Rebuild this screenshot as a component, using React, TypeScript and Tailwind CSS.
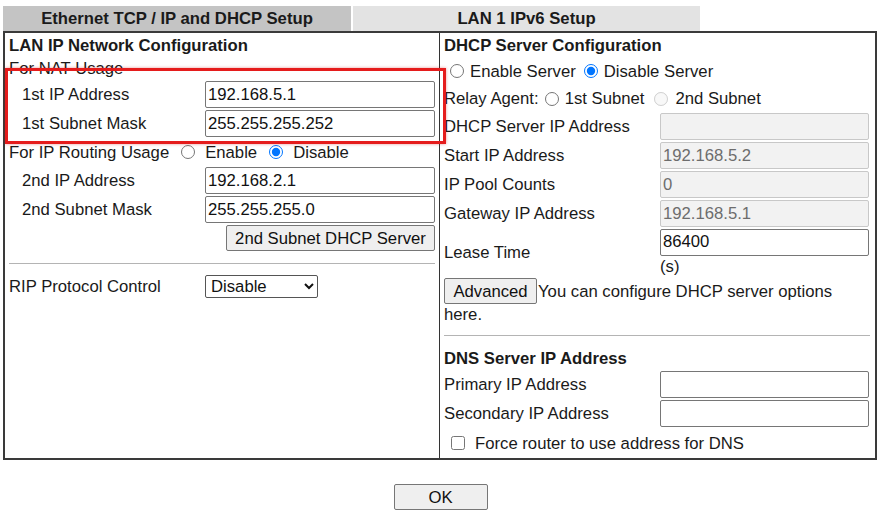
import React from 'react';

const font = { fontFamily: '"Liberation Sans", Arial, sans-serif' };

function TextBox({ value = '', disabled = false, className = '' }: { value?: string; disabled?: boolean; className?: string }) {
  return (
    <input
      type="text"
      defaultValue={value}
      disabled={disabled}
      className={
        'h-[27px] rounded-[2px] border px-[2px] text-[16.7px] outline-none ' +
        (disabled
          ? 'border-[#c8c8c8] bg-[#f2f2f2] text-[#6d6d6d] '
          : 'border-[#767676] bg-white text-[#111] ') +
        className
      }
    />
  );
}

function Radio({ name, checked = false, disabled = false }: { name: string; checked?: boolean; disabled?: boolean }) {
  return (
    <input
      type="radio"
      name={name}
      defaultChecked={checked}
      disabled={disabled}
      className="h-[14px] w-[14px] shrink-0 accent-[#0075ff]"
    />
  );
}

function LeftRow({ label, value }: { label: string; value: string }) {
  return (
    <div className="flex h-[29px] items-center">
      <span className="w-[198px] pl-[15px]">{label}</span>
      <TextBox value={value} className="w-[230px]" />
    </div>
  );
}

function RightRow({ label, value, disabled = false }: { label: string; value?: string; disabled?: boolean }) {
  return (
    <div className="flex h-[29px] items-center">
      <span className="w-[220px] pl-[4px]">{label}</span>
      <TextBox value={value} disabled={disabled} className="w-[209px]" />
    </div>
  );
}

export default function App() {
  return (
    <div className="w-[878px] bg-white px-[3px] pt-[6px] text-[16.7px] leading-[19px] text-[#1a1a1a]" style={font}>
      {/* Tabs */}
      <div className="flex h-[25px]">
        <div className="flex w-[348px] items-center justify-center bg-[#c4c4c4] font-bold">
          Ethernet TCP / IP and DHCP Setup
        </div>
        <div className="ml-[2px] flex w-[347px] items-center justify-center bg-[#e3e3e3] font-bold">
          LAN 1 IPv6 Setup
        </div>
      </div>

      {/* Main table */}
      <div className="relative flex h-[429px] w-[874px] border-2 border-[#3a3a3a]">
        {/* Left column */}
        <div className="w-[436px] border-r border-[#333] pl-[2px]">
          <div className="flex h-[24px] items-center pl-[2px] font-bold">LAN IP Network Configuration</div>
          <div className="flex h-[23px] items-center pl-[2px]">For NAT Usage</div>
          <LeftRow label="1st IP Address" value="192.168.5.1" />
          <LeftRow label="1st Subnet Mask" value="255.255.255.252" />
          <div className="flex h-[28px] items-center pl-[2px]">
            <span>For IP Routing Usage</span>
            <span className="ml-[12px] flex"><Radio name="route" /></span>
            <span className="ml-[10px]">Enable</span>
            <span className="ml-[12px] flex"><Radio name="route" checked /></span>
            <span className="ml-[10px]">Disable</span>
          </div>
          <LeftRow label="2nd IP Address" value="192.168.2.1" />
          <LeftRow label="2nd Subnet Mask" value="255.255.255.0" />
          <div className="flex h-[28px] items-center justify-end pr-[4px]">
            <button className="h-[26px] w-[209px] rounded-[2px] border border-[#767676] bg-[#efefef] text-[#111]">
              2nd Subnet DHCP Server
            </button>
          </div>
          <div className="flex h-[22px] items-center pl-[2px] pr-[4px]">
            <div className="h-0 w-full border-t border-[#b4b4b4]" />
          </div>
          <div className="flex h-[24px] items-center pl-[2px]">
            <span className="w-[196px]">RIP Protocol Control</span>
            <select
              defaultValue="Disable"
              className="h-[23px] w-[113px] rounded-[2px] border border-[#555] bg-white pl-[1px] text-[16.7px] text-[#111]"
            >
              <option>Disable</option>
              <option>Enable</option>
            </select>
          </div>
        </div>

        {/* Right column */}
        <div className="w-[436px]">
          <div className="flex h-[24px] items-center pl-[4px] font-bold">DHCP Server Configuration</div>
          <div className="flex h-[28px] items-center pl-[10px]">
            <Radio name="srv" />
            <span className="ml-[6px]">Enable Server</span>
            <span className="ml-[8px] flex"><Radio name="srv" checked /></span>
            <span className="ml-[6px]">Disable Server</span>
          </div>
          <div className="flex h-[27px] items-center pl-[4px]">
            <span>Relay Agent:</span>
            <span className="ml-[6px] flex"><Radio name="relay" /></span>
            <span className="ml-[6px]">1st Subnet</span>
            <span className="ml-[10px] flex"><Radio name="relay" disabled /></span>
            <span className="ml-[7px]">2nd Subnet</span>
          </div>
          <RightRow label="DHCP Server IP Address" disabled />
          <RightRow label="Start IP Address" value="192.168.5.2" disabled />
          <RightRow label="IP Pool Counts" value="0" disabled />
          <RightRow label="Gateway IP Address" value="192.168.5.1" disabled />
          <div className="flex h-[48px] items-center">
            <span className="w-[220px] pl-[4px]">Lease Time</span>
            <div className="flex flex-col">
              <TextBox value="86400" className="w-[209px]" />
              <span className="mt-[1px]">(s)</span>
            </div>
          </div>
          <div className="mt-[2px] pl-[4px] pr-[6px]">
            <button className="h-[26px] w-[93px] rounded-[2px] border border-[#767676] bg-[#efefef] align-middle text-[#111]">
              Advanced
            </button>
            <span className="ml-[1px] align-middle">You can configure DHCP server options here.</span>
          </div>
          <div className="flex h-[23px] items-center pl-[4px] pr-[5px]">
            <div className="h-0 w-full border-t border-[#b4b4b4]" />
          </div>
          <div className="flex h-[23px] items-center pl-[4px] font-bold">DNS Server IP Address</div>
          <RightRow label="Primary IP Address" />
          <RightRow label="Secondary IP Address" />
          <div className="flex h-[30px] items-center pl-[11px]">
            <input type="checkbox" className="h-[14px] w-[14px]" />
            <span className="ml-[10px]">Force router to use address for DNS</span>
          </div>
        </div>

        {/* Highlight frame */}
        <div className="pointer-events-none absolute left-[0px] top-[35px] h-[76px] w-[441px] border-[3px] border-[#e51c1c] shadow-[0_0_3px_rgba(200,0,0,0.4)]" />
      </div>

      {/* OK */}
      <div className="flex justify-center pt-[24px]">
        <button className="ml-[3px] h-[26px] w-[94px] rounded-[2px] border border-[#767676] bg-[#efefef] text-[#111]">
          OK
        </button>
      </div>
    </div>
  );
}
